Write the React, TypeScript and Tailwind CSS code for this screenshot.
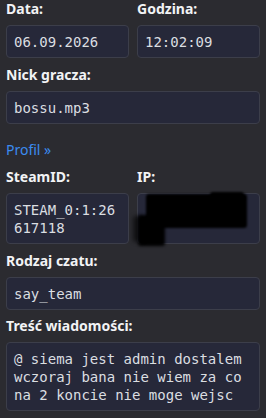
import React from 'react';

const sans = "font-['Noto_Sans',_'Liberation_Sans',_sans-serif]";
const mono = "font-['DejaVu_Sans_Mono',_'Liberation_Mono',_monospace]";

type FieldProps = { label: string; children?: React.ReactNode; className?: string };

const Field: React.FC<FieldProps> = ({ label, children, className = '' }) => (
  <div className={className}>
    <div className={`${sans} text-[14px] leading-4 font-bold text-[#f2f3f5] mb-2`}>{label}</div>
    <div
      className={`relative rounded-[4px] border border-[#3c3e4a] bg-[#262839] px-[7px] pt-[7px] pb-[6px] ${mono} text-[14px] leading-[18px] text-[#dbdee1] break-all`}
    >
      {children}
    </div>
  </div>
);

const App: React.FC = () => {
  return (
    <div className="w-[266px] h-[418px] overflow-hidden bg-[#2b2b30] px-[6px] pt-px">
      {/* Data / Godzina */}
      <div className="grid grid-cols-2 gap-x-2">
        <Field label="Data:">06.09.2026</Field>
        <Field label="Godzina:">12:02:09</Field>
      </div>

      <Field label="Nick gracza:" className="mt-[9px]">bossu.mp3</Field>

      <a href="#" className={`block mt-[18px] ${sans} text-[14px] leading-4 text-[#3b8cf0]`}>
        Profil »
      </a>

      {/* SteamID / IP */}
      <div className="grid grid-cols-2 gap-x-2 mt-[11px]">
        <Field label="SteamID:">STEAM_0:1:26617118</Field>
        <div>
          <div className={`${sans} text-[14px] leading-4 font-bold text-[#f2f3f5] mb-2`}>IP:</div>
          <div className="relative h-[51px] rounded-[4px] border border-[#3c3e4a] bg-[#262839]">
            {/* redaction scribble */}
            <div className="absolute left-[8px] top-0 w-[101px] h-[34px] bg-black rounded-[3px] blur-[1px]" />
            <div className="absolute left-[72px] top-[-2px] w-[34px] h-[8px] bg-black rounded-[3px] blur-[1px]" />
            <div className="absolute left-[0px] top-[21px] w-[27px] h-[31px] bg-black rounded-[3px] blur-[1.5px]" />
            <div className="absolute left-[-5px] top-[22px] w-[10px] h-[26px] bg-black/60 rounded-[3px] blur-[2px]" />
          </div>
        </div>
      </div>

      <Field label="Rodzaj czatu:" className="mt-[9px]">say_team</Field>

      <Field label="Treść wiadomości:" className="mt-[8px]">
        <span className="break-normal">@ siema jest admin dostalem wczoraj bana nie wiem za co na 2 koncie nie moge wejsc</span>
      </Field>
    </div>
  );
};

export default App;
